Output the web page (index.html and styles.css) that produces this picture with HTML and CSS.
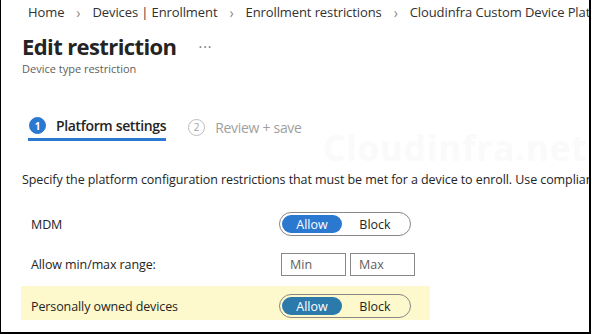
FILE: index.html
```html
<!DOCTYPE html>
<html>
<head>
<meta charset="utf-8">
<link rel="stylesheet" href="styles.css">
</head>
<body>
<div class="frame">
  <nav class="crumbs">
    <span>Home</span><span class="sep">›</span>
    <span>Devices | Enrollment</span><span class="sep">›</span>
    <span>Enrollment restrictions</span><span class="sep">›</span>
    <span>Cloudinfra Custom Device Platform</span>
  </nav>
  <header class="head">
    <div class="title-row">
      <h1>Edit restriction</h1>
      <span class="more">···</span>
    </div>
    <div class="subtitle">Device type restriction</div>
  </header>
  <div class="tabs">
    <div class="tab active"><span class="num">1</span><span class="label">Platform settings</span></div>
    <div class="tab"><span class="num">2</span><span class="label">Review + save</span></div>
  </div>
  <div class="watermark">Cloudinfra.net</div>
  <p class="desc">Specify the platform configuration restrictions that must be met for a device to enroll. Use compliance policies to restrict devices after enrollment.</p>
  <div class="rows">
    <div class="row">
      <div class="lbl">MDM</div>
      <div class="toggle"><span class="seg on">Allow</span><span class="seg">Block</span></div>
    </div>
    <div class="row">
      <div class="lbl">Allow min/max range:</div>
      <div class="inputs"><span class="box">Min</span><span class="box">Max</span></div>
    </div>
    <div class="row hl">
      <div class="lbl">Personally owned devices</div>
      <div class="toggle"><span class="seg on dark">Allow</span><span class="seg">Block</span></div>
    </div>
  </div>
</div>
</body>
</html>
```
FILE: styles.css
```css
* { box-sizing: border-box; }
html, body { margin: 0; padding: 0; background: #fff; }
body { font-family: "Open Sans", "Noto Sans", sans-serif; color: #242424; }
.frame {
  width: 591px; height: 334px;
  border-left: 1px solid #000; border-right: 2px solid #000; border-bottom: 2px solid #000;
  overflow: hidden; position: relative;
}
.crumbs {
  display: flex; align-items: center; white-space: nowrap;
  padding: 2px 0 0 27px; height: 22px; font-size: 13px; color: #323130;
  letter-spacing: -0.1px;
}
.crumbs .sep { color: #8a8886; font-size: 14px; margin: 0 12px; }
.head { padding: 8px 0 0 21px; }
.title-row { display: flex; align-items: center; }
h1 { margin: 0; font-size: 22px; font-weight: 700; letter-spacing: -0.6px; line-height: 32px; color: #242424; }
.more { margin-left: 22px; color: #777; font-size: 14px; letter-spacing: 1px; }
.subtitle { font-size: 11px; color: #605e5c; line-height: 14px; }
.tabs { display: flex; align-items: flex-start; padding: 37px 0 0 27px; }
.tab { display: flex; align-items: center; height: 28px; margin-right: 22px; color: #a19f9d; font-size: 14px; }
.tab .num {
  width: 17px; height: 17px; border-radius: 50%; border: 1px solid #bdbdbd;
  display: flex; align-items: center; justify-content: center; font-size: 10px; margin-right: 10px; color: #a19f9d;
}
.tab.active { border-bottom: 3px solid #2b78d0; padding-left: 1px; }
.tab.active .num { background: #2b78d0; border-color: #2b78d0; color: #fff; font-weight: 700; }
.tab.active .label { color: #242424; font-weight: 600; letter-spacing: -0.35px; }
.tab .label { letter-spacing: -0.3px; }
.watermark {
  position: absolute; left: 322px; top: 124px; font-size: 35px; font-weight: 700;
  color: #fafafa; white-space: nowrap; letter-spacing: 0.8px;
}
.desc {
  margin: 29px 0 0; padding-left: 21px; white-space: nowrap; font-size: 12.5px; line-height: 20px;
  color: #242424; letter-spacing: -0.08px; position: relative;
}
.rows { padding: 17px 0 0 20px; display: flex; flex-direction: column; gap: 6px; }
.row { display: flex; align-items: center; width: 409px; height: 34px; }
.row.hl { background: #fdf9cc; padding-top: 6px; margin-top: -1px; }
.lbl { width: 258px; padding-left: 10px; font-size: 12.5px; color: #242424; letter-spacing: -0.1px; }
.toggle {
  display: flex; width: 132px; height: 24px; border: 1px solid #8a8886; border-radius: 12px; padding: 2px;
  font-size: 12.5px;
}
.seg { flex: 1; display: flex; align-items: center; justify-content: center; border-radius: 10px; color: #242424; }
.seg.on { background: #2b78d0; color: #fff; flex: 0 0 60px; }
.seg.on.dark { background: #2c79ab; }
.inputs { display: flex; gap: 4px; padding-left: 2px; }
.box {
  width: 65px; height: 23px; border: 1px solid #8a8886; display: flex; align-items: center; padding-left: 8px;
  font-size: 12.5px; color: #605e5c;
}
```
